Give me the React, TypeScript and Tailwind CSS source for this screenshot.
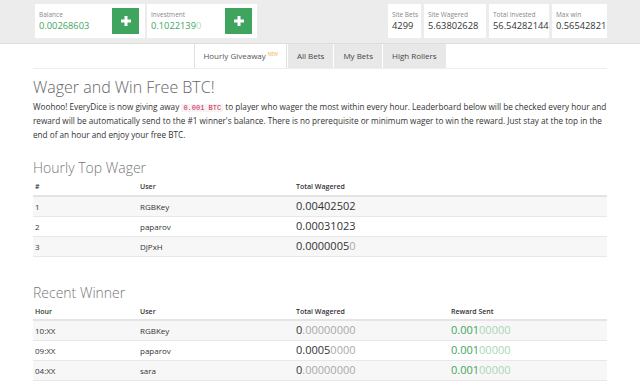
const font = { fontFamily: '"Open Sans", "Liberation Sans", sans-serif' };

function Plus() {
  return (
    <button className="flex h-[26px] w-[27px] items-center justify-center bg-[#3fa55e]">
      <svg width="12" height="12" viewBox="0 0 12 12">
        <path d="M6 1v10M1 6h10" stroke="#fff" strokeWidth="3" />
      </svg>
    </button>
  );
}

function Stat({ label, value, w }: { label: string; value: React.ReactNode; w: string }) {
  return (
    <div className={`flex h-[34px] flex-col justify-center whitespace-nowrap bg-white px-[4px] ${w}`}>
      <div className="text-[6.5px] leading-[9px] text-[#888]">{label}</div>
      <div className="text-[9.3px] leading-[14px] text-[#333]">{value}</div>
    </div>
  );
}

// trailing zeros dimmed, like the original
function Amount({ lead, tail, color = "text-[#333]", dim = "text-[#aaa]" }: { lead: string; tail: string; color?: string; dim?: string }) {
  return (
    <span className="text-[11px]">
      <span className={color}>{lead}</span>
      <span className={dim}>{tail}</span>
    </span>
  );
}

const col = "w-[107px] shrink-0 pl-[2px]";
const colU = "w-[156px] shrink-0";
const colT = "w-[155px] shrink-0";

export default function App() {
  const top = [
    ["1", "RGBKey", "0.00402502", ""],
    ["2", "paparov", "0.00031023", ""],
    ["3", "DjPxH", "0.0000005", "0"],
  ];
  const recent = [
    ["10:XX", "RGBKey", "0", ".00000000"],
    ["09:XX", "paparov", "0.0005", "0000"],
    ["04:XX", "sara", "0", ".00000000"],
    ["03:XX", "lalaim", "0.0321816", "0"],
  ];

  return (
    <div style={font} className="h-[382px] w-[640px] overflow-hidden bg-white text-[#333]">
      <header className="h-[44px] border-b border-[#dcdcdc] bg-[#ececec]">
        <div className="mx-auto flex w-[574px] justify-between pl-[2px] pt-[4px]">
          <div className="flex gap-[2px]">
            <div className="flex h-[34px] w-[110px] items-center justify-between bg-white pl-[4px] pr-[6px]">
              <div>
                <div className="text-[6.5px] leading-[9px] text-[#888]">Balance</div>
                <div className="text-[9.3px] leading-[14px] text-[#3fa55e]">0.00268603</div>
              </div>
              <Plus />
            </div>
            <div className="flex h-[34px] w-[110px] items-center justify-between bg-white pl-[4px] pr-[5px]">
              <div>
                <div className="text-[6.5px] leading-[9px] text-[#888]">Investment</div>
                <div className="text-[9.3px] leading-[14px] text-[#3fa55e]">
                  0.1022139<span className="text-[#b9dcc4]">0</span>
                </div>
              </div>
              <Plus />
            </div>
          </div>
          <div className="flex gap-[3px]">
            <Stat label="Site Bets" value="4299" w="w-[33px]" />
            <Stat label="Site Wagered" value="5.63802628" w="w-[62px]" />
            <Stat label="Total Invested" value="56.54282144" w="w-[60px]" />
            <Stat label="Max win" value="0.56542821" w="w-[55px]" />
          </div>
        </div>
      </header>

      <div className="mx-auto w-[574px]">
        <nav className="flex h-[25px] justify-center border-b border-[#eeeeee] text-[8px]">
          <div className="flex items-center border-x border-[#e0e0e0] bg-white px-[8px] text-[#555]">
            Hourly Giveaway<sup className="ml-[2px] text-[4.5px] text-[#f0ad4e]">NEW</sup>
          </div>
          <div className="flex items-center border-l border-[#fff] bg-[#e8e8e8] px-[9px] text-[#444]">All Bets</div>
          <div className="flex items-center border-l border-[#fff] bg-[#e8e8e8] px-[9px] text-[#444]">My Bets</div>
          <div className="flex items-center border-l border-[#fff] bg-[#e8e8e8] px-[9px] text-[#444]">High Rollers</div>
        </nav>

        <h1 className="mt-[8px] text-[16px] font-light leading-[20px] text-[#666]">Wager and Win Free BTC!</h1>
        <p className="mt-[3px] text-[8.2px] leading-[14px] text-[#333]">
          Woohoo! EveryDice is now giving away{" "}
          <code
            style={{ fontFamily: '"Liberation Mono", monospace' }}
            className="bg-[#f9f2f4] px-[2px] text-[7px] leading-[7px] text-[#c7254e]"
          >
            0.001 BTC
          </code>{" "}
          to player who wager the most within every hour. Leaderboard below will be checked every hour and reward will be
          automatically send to the #1 winner's balance. There is no prerequisite or minimum wager to win the reward. Just
          stay at the top in the end of an hour and enjoy your free BTC.
        </p>

        <h2 className="mt-[17px] text-[14px] font-light leading-[18px] text-[#777]">Hourly Top Wager</h2>
        <div className="mt-[3px] text-[7px]">
          <div className="flex h-[17px] items-center border-b-2 border-[#e4e4e4] font-semibold">
            <div className={col}>#</div>
            <div className={colU}>User</div>
            <div className={colT}>Total Wagered</div>
          </div>
          {top.map((r, i) => (
            <div
              key={r[0]}
              className={`flex h-[20px] items-center border-b border-[#e8e8e8] text-[8px] ${i % 2 === 0 ? "bg-[#f7f7f7]" : ""}`}
            >
              <div className={col}>{r[0]}</div>
              <div className={colU}>{r[1]}</div>
              <div className={colT}>
                <Amount lead={r[2]} tail={r[3]} />
              </div>
            </div>
          ))}
        </div>

        <h2 className="mt-[27px] text-[14px] font-light leading-[18px] text-[#777]">Recent Winner</h2>
        <div className="mt-[3px] text-[7px]">
          <div className="flex h-[16px] items-center border-b-2 border-[#e4e4e4] font-semibold">
            <div className={col}>Hour</div>
            <div className={colU}>User</div>
            <div className={colT}>Total Wagered</div>
            <div className="flex-1">Reward Sent</div>
          </div>
          {recent.map((r, i) => (
            <div
              key={r[0]}
              className={`flex h-[20px] items-center border-b border-[#e8e8e8] text-[8px] ${i % 2 === 0 ? "bg-[#f7f7f7]" : ""}`}
            >
              <div className={col}>{r[0]}</div>
              <div className={colU}>{r[1]}</div>
              <div className={colT}>
                <Amount lead={r[2]} tail={r[3]} />
              </div>
              <div className="flex-1">
                <Amount lead="0.001" tail="00000" color="text-[#3fa55e]" dim="text-[#a9d6b5]" />
              </div>
            </div>
          ))}
        </div>
      </div>
    </div>
  );
}
